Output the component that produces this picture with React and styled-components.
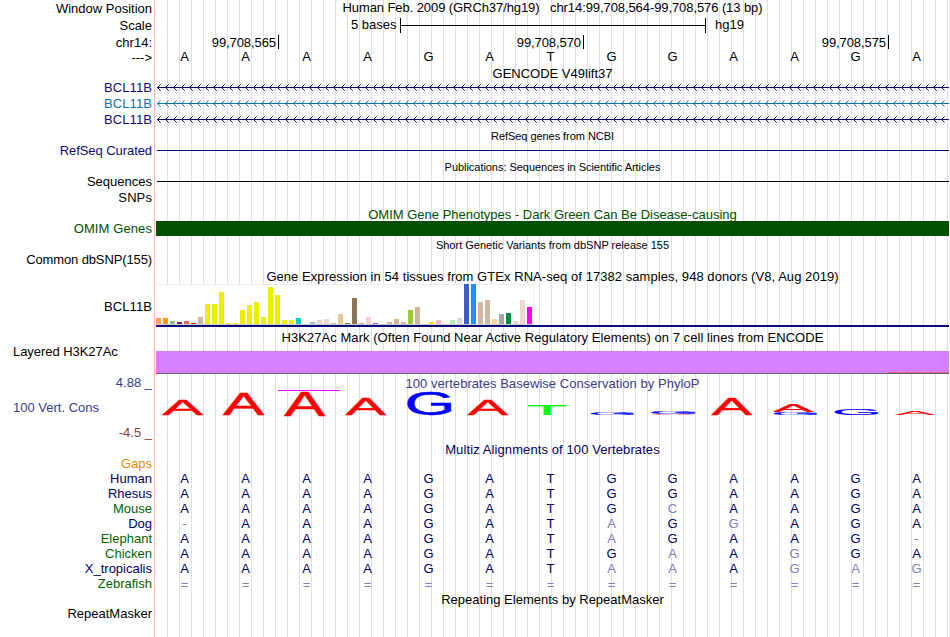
import React from 'react';
import styled, { createGlobalStyle } from 'styled-components';

const Global = createGlobalStyle`
  html, body { margin: 0; padding: 0; background: #fff; overflow: hidden; }
  * { box-sizing: border-box; }
`;

const Browser = styled.main`
  width: 950px;
  height: 637px;
  overflow: hidden;
  display: flex;
  flex-direction: column;
  font: 13px/16px "Liberation Sans", Arial, sans-serif;
  color: #000;
  background:
    linear-gradient(#ffb4b4, #ffb4b4) 154px 0 / 1px 100% no-repeat,
    repeating-linear-gradient(to right, #dcdcff 0 1px, transparent 1px 12px) 167px 0 / 783px 100% no-repeat,
    #fff;
`;

const Row = styled.section`
  display: flex;
  flex: none;
  height: ${p => p.$h}px;
`;

const Label = styled.div`
  width: 152px;
  flex: none;
  text-align: ${p => (p.$left ? 'left' : 'right')};
  padding-left: ${p => (p.$left ? 13 : 0)}px;
  padding-top: ${p => p.$top || 0}px;
  color: ${p => p.$color || '#000'};
  letter-spacing: ${p => p.$ls || 0}px;
  white-space: pre;
`;

const Track = styled.div`
  flex: none;
  width: 793px;
  margin-left: 4px;
  padding-top: ${p => p.$top || 0}px;
`;

const Title = styled.div`
  text-align: center;
  white-space: pre;
  font-size: ${p => (p.$small ? 11 : 13)}px;
  color: ${p => p.$color || '#000'};
  letter-spacing: ${p => p.$ls || 0}px;
`;

const Line = styled.div`
  height: ${p => p.$h || 1}px;
  margin-left: ${p => p.$x || 0}px;
  background: ${p => p.$color};
`;

const Bar = styled.div`
  height: 15px;
  background: #005000;
`;

const ScaleBar = styled.div`
  display: flex;
  align-items: center;
  height: 16px;
  padding-left: 195px;
  white-space: pre;
`;

const Ruler = styled.div`
  width: 306px;
  height: 15px;
  margin: 0 9.5px 0 3px;
  border: solid #000;
  border-width: 0 1px;
  display: flex;
  align-items: center;
  &::before { content: ''; flex: 1; height: 1px; background: #000; }
`;

const Ticks = styled.div`
  display: flex;
`;

const Tick = styled.div`
  width: ${p => p.$w}px;
  height: 14px;
  border-right: 1px solid #000;
  padding-right: 2px;
  text-align: right;
  letter-spacing: -0.08px;
`;

const Bases = styled.div`
  display: grid;
  grid-template-columns: repeat(13, 61px);
  margin-left: -2px;
  text-align: center;
`;

const Base = styled.span`
  color: ${p => p.$color};
`;

const Expression = styled.div`
  display: flex;
  align-items: flex-end;
  gap: 2px;
  width: 378px;
  height: 41px;
  background: #fff;
  border-top: 1px solid #eee;
  border-right: 1px solid #eee;
  border-bottom: 1px solid #ccc;
`;

const Tissue = styled.div`
  flex: none;
  width: 5px;
  height: ${p => p.$h}px;
  background: ${p => p.$color};
`;

const Mark = styled.div`
  height: 23px;
  background: #d580ff;
  border-bottom: 1px solid #666;
  display: flex;
  align-items: flex-end;
  justify-content: flex-end;
`;

const MarkTail = styled.div`
  width: 61px;
  height: 1px;
  background: #e0607c;
`;

const Drawing = styled.svg`
  display: block;
  overflow: visible;
`;

const NAVY = '#0c0c78';
const DEEP = '#000064';
const GREEN = '#006400';

const Y = '#eeee00';
const T = '#cdb79e';
const P = '#eed5d2';
const tissues = [
  [6, '#ffa54f'], [6, '#ee9a00'], [3, '#8fbc8f'], [2, '#8b1c62'], [3, '#ee6a50'], [1, '#ff0000'], [7, T],
  [20, Y], [20, Y], [32, Y], [1, Y], [1, Y], [14, Y], [19, Y], [22, Y], [7, Y], [37, Y], [29, Y], [4, Y], [4, Y],
  [6, '#00cdcd'], [0, P], [2, '#9ac0cd'], [4, P], [5, P], [1, T], [10, '#eec591'], [1, '#8b7355'], [26, '#8b7355'],
  [1, '#cdaa7d'], [7, P], [1, '#b452cd'], [0, T], [2, T], [5, T], [2, T], [14, '#9acd32'], [17, T], [0, T],
  [2, '#ffd700'], [4, '#ffb6c1'], [0, T], [4, '#b4eeb4'], [6, '#d9d9d9'], [40, '#3a5fcd'], [40, '#1e90ff'],
  [22, T], [24, T], [5, '#ffd39b'], [10, '#a6a6a6'], [11, '#008b45'], [3, P], [24, P], [17, '#ff00ff'],
];

/* Left, right, top and bottom of every letter, in track coordinates. */
const logo = [
  ['A', 6.3, 47, 10, 24.8], ['A', 67, 108, 3.6, 24.8], ['A', 128.3, 169, 1.7, 25.6], ['A', 189.7, 230, 8, 24.8],
  ['G', 251.7, 295.3, 2, 25], ['A', 311.7, 352, 9, 24.8], ['T', 372.3, 410, 15, 25],
  ['G', 435, 478, 22.9, 25], ['A', 496, 539, 23.8, 24.8], ['G', 495.7, 539.5, 21, 23.6],
  ['A', 555.7, 596, 8, 24.8], ['G', 618, 661, 22, 24.8], ['A', 617, 657.5, 14, 21.6],
  ['G', 679, 722, 18, 24.8], ['A', 739, 779, 21, 24.8],
];
const extents = { A: [0.002, 0.665, 0, 0.688], G: [0.05, 0.716, 0.01, 0.698], T: [0.022, 0.589, 0, 0.688] };
const inks = { A: '#ff0000', G: '#0000ff', T: '#00ff00' };

function LogoLetter({ data: [ch, l, r, t, b] }) {
  const [x0, x1, drop, rise] = extents[ch];
  const sx = (r - l) / (x1 - x0) / 100;
  const sy = (b - t) / (rise + drop) / 100;
  return (
    <text fontSize="100" fill={inks[ch]} stroke={inks[ch]} strokeWidth="1.5"
      transform={`translate(${l - x0 * 100 * sx} ${b - drop * 100 * sy}) scale(${sx} ${sy})`}>
      {ch}
    </text>
  );
}

function Gene({ name, color, ink, id }) {
  return (
    <Row $h={16}>
      <Label $color={color} $ls={0.1}>{name}</Label>
      <Track>
        <Drawing width="793" height="16" shapeRendering="crispEdges">
          <defs>
            <pattern id={id} x="1" y="0" width="8" height="16" patternUnits="userSpaceOnUse">
              <path fill={ink} d="M0 7h1v1h-1zM1 6h1v1h-1zM1 8h1v1h-1zM2 5h1v1h-1zM2 9h1v1h-1z" />
              <path fill={ink} opacity="0.55" d="M3 4h1v1h-1zM3 10h1v1h-1z" />
            </pattern>
          </defs>
          <rect width="793" height="16" fill={`url(#${id})`} />
          <rect x="1" y="7" width="792" height="1" fill={ink} />
        </Drawing>
      </Track>
    </Row>
  );
}

const species = [
  ['Human', DEEP, 'AAAAGATGGAAGA', ''],
  ['Rhesus', DEEP, 'AAAAGATGGAAGA', ''],
  ['Mouse', GREEN, 'AAAAGATGCAAGA', '8'],
  ['Dog', DEEP, '-AAAGATAGGAGA', '0 7 9'],
  ['Elephant', GREEN, 'AAAAGATAGAAG-', '7 12'],
  ['Chicken', GREEN, 'AAAAGATGAAGGA', '8 10'],
  ['X_tropicalis', DEEP, 'AAAAGATAAAGAG', '7 8 10 11 12'],
  ['Zebrafish', GREEN, '=============', '0 1 2 3 4 5 6 7 8 9 10 11 12'],
];

function Sequence({ bases, color, faded = '' }) {
  const dim = faded.split(' ');
  return (
    <Bases>
      {[...bases].map((b, i) => (
        <Base key={i} $color={dim.includes(String(i)) ? '#8080b2' : color}>{b}</Base>
      ))}
    </Bases>
  );
}

export default function App() {
  return (
    <>
      <Global />
      <Browser>
        <Row $h={17}>
          <Label $top={1}>Window Position</Label>
          <Track><Title $ls={-0.085}>{'Human Feb. 2009 (GRCh37/hg19)   chr14:99,708,564-99,708,576 (13 bp)'}</Title></Track>
        </Row>
        <Row $h={17}>
          <Label $top={1}>Scale</Label>
          <Track><ScaleBar>5 bases<Ruler />hg19</ScaleBar></Track>
        </Row>
        <Row $h={15}>
          <Label $top={1}>chr14:</Label>
          <Track $top={1}>
            <Ticks><Tick $w={123}>99,708,565</Tick><Tick $w={305}>99,708,570</Tick><Tick $w={305}>99,708,575</Tick></Ticks>
          </Track>
        </Row>
        <Row $h={17}>
          <Label $top={1}>---&gt;</Label>
          <Track><Sequence bases="AAAAGATGGAAGA" color="#000" /></Track>
        </Row>
        <Row $h={14}><Label /><Track><Title>GENCODE V49lift37</Title></Track></Row>
        <Gene id="arrows-a" name="BCL11B" color={NAVY} ink={NAVY} />
        <Gene id="arrows-b" name="BCL11B" color="#0f70b4" ink="#0f70b4" />
        <Gene id="arrows-c" name="BCL11B" color={NAVY} ink={NAVY} />
        <Row $h={15}><Label /><Track><Title $small $ls={-0.05}>RefSeq genes from NCBI</Title></Track></Row>
        <Row $h={16}>
          <Label $color={NAVY} $ls={-0.07}>RefSeq Curated</Label>
          <Track $top={7}><Line $x={1} $color={NAVY} /></Track>
        </Row>
        <Row $h={15}><Label /><Track><Title $small $ls={-0.04}>Publications: Sequences in Scientific Articles</Title></Track></Row>
        <Row $h={16}><Label>Sequences</Label><Track $top={7}><Line $x={1} $color="#000" /></Track></Row>
        <Row $h={16}><Label $ls={0.1}>SNPs</Label></Row>
        <Row $h={15}><Label /><Track $top={1}><Title $color="#005000">OMIM Gene Phenotypes - Dark Green Can Be Disease-causing</Title></Track></Row>
        <Row $h={15}><Label $color="#005000" $ls={0.1}>OMIM Genes</Label><Track><Bar /></Track></Row>
        <Row $h={16}><Label /><Track $top={1}><Title $small>Short Genetic Variants from dbSNP release 155</Title></Track></Row>
        <Row $h={16}><Label $ls={-0.12}>Common dbSNP(155)</Label></Row>
        <Row $h={16}><Label /><Track $top={1}><Title $ls={0.055}>Gene Expression in 54 tissues from GTEx RNA-seq of 17382 samples, 948 donors (V8, Aug 2019)</Title></Track></Row>
        <Row $h={45}>
          <Label $top={15} $ls={0.1}>BCL11B</Label>
          <Track>
            <Expression>{tissues.map(([h, c], i) => <Tissue key={i} $h={h} $color={c} />)}</Expression>
            <Line $h={2} $color={NAVY} />
          </Track>
        </Row>
        <Row $h={22}><Label $left $top={15} $ls={-0.05}>Layered H3K27Ac</Label><Track $top={1}><Title $ls={0.05}>H3K27Ac Mark (Often Found Near Active Regulatory Elements) on 7 cell lines from ENCODE</Title></Track></Row>
        <Row $h={24}><Label /><Track><Mark><MarkTail /></Mark></Track></Row>
        <Row $h={15}>
          <Label $color="#3c3c8c">4.88 _</Label>
          <Track $top={1}><Title $color="#3c3c8c" $ls={0.04}>100 vertebrates Basewise Conservation by PhyloP</Title></Track>
        </Row>
        <Row $h={35}>
          <Label $left $top={10} $color="#3c3c8c">100 Vert. Cons</Label>
          <Track>
            <Drawing width="793" height="35">
              <rect x="122" y="0" width="62" height="1" fill="#ff00ff" />
              {logo.map((d, i) => <LogoLetter key={i} data={d} />)}
            </Drawing>
          </Track>
        </Row>
        <Row $h={17}><Label $color="#8c3c3c">-4.5 _</Label></Row>
        <Row $h={14}><Label /><Track><Title $color={DEEP} $ls={0.1}>Multiz Alignments of 100 Vertebrates</Title></Track></Row>
        <Row $h={15}><Label $color="#e68a00">Gaps</Label></Row>
        {species.map(([name, color, bases, faded]) => (
          <Row key={name} $h={15}>
            <Label $color={color}>{name}</Label>
            <Track $top={bases[0] === '=' ? 1 : 0}><Sequence bases={bases} color={DEEP} faded={faded} /></Track>
          </Row>
        ))}
        <Row $h={15}><Label /><Track $top={1}><Title>Repeating Elements by RepeatMasker</Title></Track></Row>
        <Row $h={16}><Label>RepeatMasker</Label></Row>
      </Browser>
    </>
  );
}
